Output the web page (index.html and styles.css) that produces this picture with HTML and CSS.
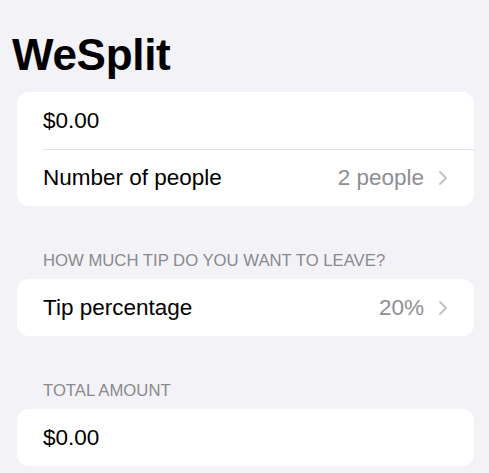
FILE: index.html
```html
<!DOCTYPE html>
<html>
<head>
<meta charset="utf-8">
<link rel="stylesheet" href="styles.css">
</head>
<body>
<div class="screen">
  <h1 class="title">WeSplit</h1>
  <div class="card">
    <div class="row"><span class="label">$0.00</span></div>
    <div class="row"><span class="label">Number of people</span><span class="value">2 people<span class="chev"><svg width="10" height="16" viewBox="0 0 10 16"><path d="M2 2 L8 8 L2 14" fill="none" stroke="#c4c4c7" stroke-width="2" stroke-linecap="round" stroke-linejoin="round"/></svg></span></span></div>
  </div>
  <div class="section-header">HOW MUCH TIP DO YOU WANT TO LEAVE?</div>
  <div class="card card-under-header">
    <div class="row"><span class="label">Tip percentage</span><span class="value">20%<span class="chev"><svg width="10" height="16" viewBox="0 0 10 16"><path d="M2 2 L8 8 L2 14" fill="none" stroke="#c4c4c7" stroke-width="2" stroke-linecap="round" stroke-linejoin="round"/></svg></span></span></div>
  </div>
  <div class="section-header">TOTAL AMOUNT</div>
  <div class="card card-under-header">
    <div class="row"><span class="label">$0.00</span></div>
  </div>
</div>
</body>
</html>
```

FILE: styles.css
```css
html, body {
  margin: 0;
  padding: 0;
  background: #f2f2f7;
  font-family: "Liberation Sans", Arial, sans-serif;
  color: #000;
}
.screen {
  display: flex;
  flex-direction: column;
  padding: 0 15px 0 17px;
}
.title {
  margin: 30px 0 0 -5px;
  font-size: 44px;
  font-weight: bold;
  line-height: 50px;
  letter-spacing: -0.3px;
}
.card {
  background: #fff;
  border-radius: 12px;
  margin-top: 12px;
  overflow: hidden;
}
.card-under-header {
  margin-top: 8px;
}
.row {
  box-sizing: border-box;
  height: 57px;
  display: flex;
  align-items: center;
  justify-content: space-between;
  margin-left: 26px;
  padding-right: 26px;
  font-size: 22.5px;
}
.row + .row {
  border-top: 1px solid #e3e3e6;
}
.value {
  color: #8e8e93;
  display: flex;
  align-items: center;
}
.chev {
  display: flex;
  margin-left: 14px;
}
.section-header {
  margin: 45px 0 0 26px;
  font-size: 16.7px;
  color: #8a8a8e;
  line-height: 20px;
}
```
